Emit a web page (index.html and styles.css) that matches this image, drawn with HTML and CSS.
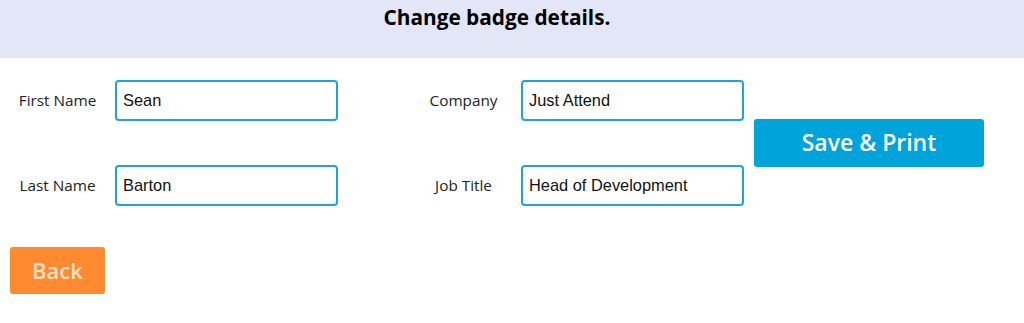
FILE: index.html
```html
<!DOCTYPE html>
<html lang="en">
<head>
    <meta charset="UTF-8">
    <meta name="viewport" content="width=device-width, initial-scale=1.0">
    <title>Change badge details</title>
    <link rel="stylesheet" href="styles.css">
</head>
<body>
    <div class="header">
        <h1>Change badge details.</h1>
    </div>

    <div class="form">
        <div class="fields">
            <div class="field">
                <label class="field-label" for="first-name">First Name</label>
                <input class="field-input" id="first-name" type="text" value="Sean">
            </div>
            <div class="field">
                <label class="field-label" for="company">Company</label>
                <input class="field-input" id="company" type="text" value="Just Attend">
            </div>
            <div class="field">
                <label class="field-label" for="last-name">Last Name</label>
                <input class="field-input" id="last-name" type="text" value="Barton">
            </div>
            <div class="field">
                <label class="field-label" for="job-title">Job Title</label>
                <input class="field-input" id="job-title" type="text" value="Head of Development">
            </div>
        </div>

        <button class="btn btn-save">Save &amp; Print</button>
    </div>

    <div class="actions">
        <button class="btn btn-back">Back</button>
    </div>
</body>
</html>
```

FILE: styles.css
```css
body {
    font-family: "Open Sans", "Noto Sans", sans-serif;
    margin: 0;
    background-color: white;
    color: #222;
}

.header {
    height: 58px;
    background-color: #e3e6f7;
    padding: 3px 30px 0 0;
    box-sizing: border-box;
}

h1 {
    margin: 0;
    text-align: center;
    font-size: 20.8px;
    font-weight: bold;
    color: #000;
}

.form {
    display: flex;
    align-items: center;
    padding-top: 22px;
}

.fields {
    display: grid;
    grid-template-columns: 338px 338px;
    column-gap: 68px;
    row-gap: 44px;
}

.field {
    display: flex;
    align-items: center;
}

.field-label {
    width: 115px;
    flex-shrink: 0;
    text-align: center;
    font-size: 15.3px;
    color: #222;
    padding-bottom: 2px;
}

.field-input {
    width: 223px;
    height: 41px;
    box-sizing: border-box;
    border: 2px solid #1ea4dc;
    border-radius: 4px;
    padding: 0 6px;
    font-family: "Liberation Sans", Arial, sans-serif;
    font-size: 16.4px;
    color: #111;
    outline: none;
}

.btn {
    border: none;
    border-radius: 3px;
    font-family: "Open Sans", "Noto Sans", sans-serif;
    font-weight: 600;
    cursor: pointer;
}

.btn-save {
    margin-left: 10px;
    width: 230px;
    height: 48px;
    background-color: #00a4da;
    color: white;
    font-size: 23px;
    padding: 0 0 2px;
}

.actions {
    padding: 41px 0 0 10px;
}

.btn-back {
    width: 95px;
    height: 47px;
    background-color: #ff8a30;
    color: #fde1cb;
    font-size: 22px;
    padding: 0 0 2px;
}
```
